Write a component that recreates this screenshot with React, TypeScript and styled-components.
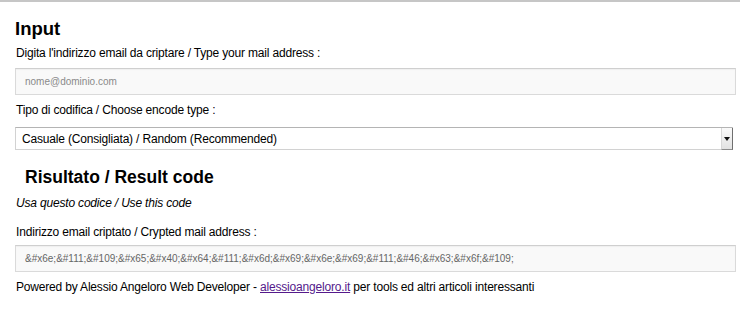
import React from 'react';
import styled, { createGlobalStyle } from 'styled-components';

const GlobalStyle = createGlobalStyle`
  html, body {
    margin: 0;
    padding: 0;
    background: #ffffff;
  }

  body {
    font-family: "Liberation Sans", Arial, Helvetica, sans-serif;
    color: #000000;
  }
`;

const Page = styled.div`
  border-top: 2px solid #c6c6c6;
  padding: 0 4px 0 15px;
`;

const Heading = styled.h2<{ indent?: number; size: number }>`
  margin: 16px 0 0;
  padding-left: ${({ indent }): number => indent || 0}px;
  font-size: ${({ size }): number => size}px;
  line-height: 22px;
  font-weight: bold;
`;

const Label = styled.p<{ gap: number; italic?: boolean }>`
  margin: ${({ gap }): number => gap}px 0 0 1px;
  font-size: 12px;
  line-height: 15px;
  letter-spacing: -0.18px;
  font-style: ${({ italic }): string => (italic ? 'italic' : 'normal')};
`;

const Field = styled.input<{ gap: number }>`
  display: block;
  box-sizing: border-box;
  width: 100%;
  height: 27px;
  margin: ${({ gap }): number => gap}px 0 0;
  padding: 0 9px;
  border: 1px solid #dadada;
  border-top-color: #cfcfcf;
  background: #f9f9f9;
  box-shadow: inset 0 1px 1px rgba(0, 0, 0, 0.04);
  font-family: "Liberation Sans", Arial, Helvetica, sans-serif;
  font-size: 10px;
  color: #666666;
  outline: none;

  &::placeholder {
    color: #8a8a8a;
  }
`;

const SelectBox = styled.div`
  display: flex;
  box-sizing: border-box;
  height: 23px;
  margin: 9px 3px 0 0;
  border: 1px solid #d2d2d2;
  border-top-color: #b4b4b4;
  background: #ffffff;
`;

const Select = styled.select`
  flex: 1;
  appearance: none;
  -webkit-appearance: none;
  border: none;
  background: transparent;
  padding: 0 0 0 6px;
  margin: 0;
  font-family: "Liberation Sans", Arial, Helvetica, sans-serif;
  font-size: 12px;
  letter-spacing: -0.18px;
  color: #000000;
  outline: none;
`;

const ArrowButton = styled.div`
  display: flex;
  align-items: center;
  justify-content: center;
  width: 10px;
  margin: 0 -1px -1px 0;
  border-left: 1px solid #d8d8d8;
  border-right: 1px solid #6f6f6f;
  border-bottom: 1px solid #8c8c8c;
  background: linear-gradient(#fafafa, #e2e2e2);
`;

const Footer = styled.p`
  margin: 8px 0 0 1px;
  font-size: 12px;
  line-height: 15px;
  letter-spacing: -0.18px;
`;

const Link = styled.a`
  color: #551a8b;
  text-decoration: underline;
`;

const encoded =
  '&#x6e;&#111;&#109;&#x65;&#x40;&#x64;&#111;&#x6d;&#x69;&#x6e;&#x69;&#111;&#46;&#x63;&#x6f;&#109;';

export default function App(): React.ReactElement {
  return (
    <>
      <GlobalStyle />
      <Page>
        <Heading size={18.5}>Input</Heading>
        <Label gap={6}>Digita l'indirizzo email da criptare / Type your mail address :</Label>
        <Field gap={7} placeholder="nome@dominio.com" />
        <Label gap={8}>Tipo di codifica / Choose encode type :</Label>
        <SelectBox>
          <Select defaultValue="random">
            <option value="random">Casuale (Consigliata) / Random (Recommended)</option>
          </Select>
          <ArrowButton>
            <svg width="6" height="4" viewBox="0 0 6 4">
              <path d="M0 0h6L3 4z" fill="#111" />
            </svg>
          </ArrowButton>
        </SelectBox>
        <Heading indent={10} size={17.5}>
          Risultato / Result code
        </Heading>
        <Label gap={8} italic>
          Usa questo codice / Use this code
        </Label>
        <Label gap={14}>Indirizzo email criptato / Crypted mail address :</Label>
        <Field gap={5} readOnly value={encoded} />
        <Footer>
          Powered by Alessio Angeloro Web Developer - <Link href="#">alessioangeloro.it</Link> per tools ed altri
          articoli interessanti
        </Footer>
      </Page>
    </>
  );
}
